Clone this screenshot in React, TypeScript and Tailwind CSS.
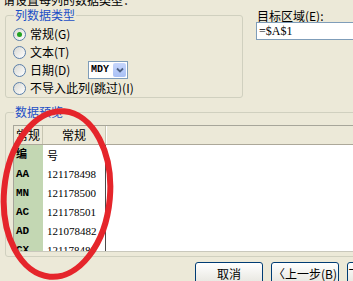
import React from "react";

const cjk = '"Noto Sans CJK SC", "Liberation Sans", sans-serif';
const serif = '"Liberation Serif", "Noto Sans CJK SC", serif';
const mono = '"Liberation Mono", "Noto Sans CJK SC", monospace';

type RadioProps = { checked?: boolean; label: string };

function Radio({ checked, label }: RadioProps) {
  return (
    <div className="flex h-[18px] items-center">
      <span className="flex h-[13px] w-[13px] shrink-0 items-center justify-center rounded-full border border-[#5B7FAA] bg-gradient-to-br from-[#D8D8D2] to-white">
        {checked ? <span className="h-[5px] w-[5px] rounded-full bg-[#22A322]" /> : null}
      </span>
      <span className="ml-[4px] whitespace-nowrap text-[12px] leading-[14px] text-black">{label}</span>
    </div>
  );
}

const rows = [
  ["编", "号"],
  ["AA", "121178498"],
  ["MN", "121178500"],
  ["AC", "121178501"],
  ["AD", "121078482"],
  ["CX", "121178488"],
];

export default function App() {
  return (
    <div
      className="relative flex h-[281px] w-[353px] flex-col overflow-hidden bg-[#ECE9D8] text-black"
      style={{ fontFamily: cjk }}
    >
      <div className="-mt-[7px] h-[14px] pl-[3px] text-[12px] leading-[14px]">请设置每列的数据类型：</div>

      <div className="mt-[2px] flex">
        <fieldset className="ml-[5px] h-[89px] w-[238px] shrink-0 rounded-[3px] border border-[#D0D0BF]">
          <legend className="ml-[8px] px-[1px] text-[12px] leading-[12px] text-[#1C4FC6]">列数据类型</legend>
          <div className="flex flex-col pl-[7px] pt-[4px]">
            <Radio checked label="常规(G)" />
            <Radio label="文本(T)" />
            <div className="flex items-center">
              <div className="w-[75px] shrink-0">
                <Radio label="日期(D)" />
              </div>
              <div className="flex h-[18px] w-[40px] items-center border border-[#7F9DB9] bg-white">
                <span
                  className="flex-1 pl-[2px] text-[10px] font-bold leading-[14px]"
                  style={{ fontFamily: mono }}
                >
                  MDY
                </span>
                <span className="mr-[1px] flex h-[14px] w-[13px] items-center justify-center rounded-[2px] bg-gradient-to-b from-[#C6D6FC] to-[#A9C1F5]">
                  <svg width="8" height="6" viewBox="0 0 8 6">
                    <path d="M1 1.5 L4 4.5 L7 1.5" fill="none" stroke="#4D6185" strokeWidth="1.8" />
                  </svg>
                </span>
              </div>
            </div>
            <Radio label="不导入此列(跳过)(I)" />
          </div>
        </fieldset>

        <div className="ml-[13px] flex flex-1 flex-col pt-[1px]">
          <div className="pl-[1px] text-[12px] leading-[12px]">目标区域(E):</div>
          <div className="flex h-[18px] items-center border border-[#7F9DB9] border-r-0 bg-white pl-[2px]">
            <span className="text-[12px] leading-[14px]" style={{ fontFamily: serif }}>
              =$A$1
            </span>
          </div>
        </div>
      </div>

      <fieldset className="ml-[5px] mt-[8px] w-[360px] shrink-0 rounded-[3px] border border-[#D0D0BF] pb-[4px]">
        <legend className="ml-[8px] px-[1px] text-[12px] leading-[12px] text-[#1C4FC6]">数据预览</legend>
        <div className="ml-[7px] mt-[7px] flex h-[127px] flex-col overflow-hidden border-l border-t border-b border-[#A7A69A] border-b-[#C9C8BC] bg-white">
          <div className="flex h-[19px] shrink-0 border-b border-[#ACA899] bg-[#ECE9D8] text-[12px] leading-[14px]">
            <div className="flex w-[29px] items-center justify-center border-r border-[#C7C5B2]">常规</div>
            <div className="flex w-[63px] items-center justify-center border-r border-[#C7C5B2] shadow-[1px_0_0_#FFFFFF]">
              常规
            </div>
            <div className="flex-1" />
          </div>
          <div className="flex flex-1">
            <div className="flex w-[29px] flex-col bg-[#C3D7B3]">
              {rows.map(([a]) => (
                <div
                  key={a}
                  className="flex h-[19px] shrink-0 items-center pl-[2px] text-[11px] font-bold leading-[14px]"
                  style={{ fontFamily: mono }}
                >
                  {a}
                </div>
              ))}
            </div>
            <div className="flex w-[63px] flex-col border-r border-[#4A4A4A]">
              {rows.map(([a, b]) => (
                <div
                  key={a}
                  className="flex h-[19px] shrink-0 items-center pl-[4px] text-[11px] leading-[14px]"
                  style={{ fontFamily: b === "号" ? cjk : serif }}
                >
                  {b}
                </div>
              ))}
            </div>
            <div className="flex-1" />
          </div>
        </div>
      </fieldset>

      <div className="mt-[5px] flex gap-[8px] pl-[195px]">
        {["取消", "〈上一步(B)", "下一步(N)〉"].map((t) => (
          <div
            key={t}
            className="flex h-[23px] w-[68px] shrink-0 items-center justify-center rounded-[3px] border border-[#003C74] bg-gradient-to-b from-white to-[#E6E5DE] text-[12px] leading-[14px]"
          >
            {t}
          </div>
        ))}
      </div>

      <svg className="pointer-events-none absolute left-0 top-0" width="353" height="281" viewBox="0 0 353 281">
        <ellipse
          cx="57"
          cy="194"
          rx="53"
          ry="83"
          transform="rotate(5 57 194)"
          fill="none"
          stroke="#E5252B"
          strokeWidth="6"
        />
      </svg>
    </div>
  );
}
